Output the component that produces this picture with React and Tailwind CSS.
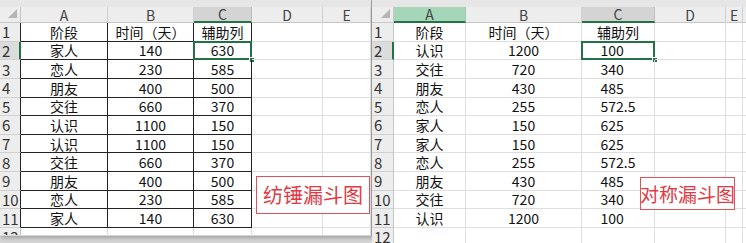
import React from 'react';

const FONT = "font-['Noto_Sans_CJK_SC','Noto_Sans',sans-serif]";

const spindle = [
  ['阶段', '时间（天）', '辅助列'],
  ['家人', 140, 630],
  ['恋人', 230, 585],
  ['朋友', 400, 500],
  ['交往', 660, 370],
  ['认识', 1100, 150],
  ['认识', 1100, 150],
  ['交往', 660, 370],
  ['朋友', 400, 500],
  ['恋人', 230, 585],
  ['家人', 140, 630],
];

const symmetric = [
  ['阶段', '时间（天）', '辅助列'],
  ['认识', 1200, 100],
  ['交往', 720, 340],
  ['朋友', 430, 485],
  ['恋人', 255, 572.5],
  ['家人', 150, 625],
  ['家人', 150, 625],
  ['恋人', 255, 572.5],
  ['朋友', 430, 485],
  ['交往', 720, 340],
  ['认识', 1200, 100],
];

const letters = ['A', 'B', 'C', 'D', 'E', 'F'];

// "0.?" style number: integers keep room for the decimal so columns line up
const Decimal = ({ value }) => {
  if (typeof value !== 'number' || !Number.isInteger(value)) return <span>{value}</span>;
  return (
    <span>
      {value}
      <span className="invisible">.5</span>
    </span>
  );
};

const Corner = () => (
  <div className="relative h-full border-r border-b border-[#c8c8c8] bg-[#ededed]">
    <svg className="absolute right-[3px] bottom-[4px]" width="9" height="9" viewBox="0 0 9 9">
      <polygon points="9,0 9,9 0,9" fill="#b5b5b5" />
    </svg>
  </div>
);

const Sheet = ({ grid, widths, data, bordered, greenCol, decimalCol, label, labelBox, tall }) => {
  const rowCount = 12;
  return (
    <div className={`relative bg-white overflow-hidden ${FONT} ${tall}`}>
      {/* formula bar edge */}
      <div className="h-[7px] bg-[#e6e6e6]" />

      {/* column header strip */}
      <div className={`grid ${grid} h-[16px]`}>
        <Corner />
        {widths.map((_, i) => {
          let cls = 'bg-[#ededed] border-r border-[#d0d0d0] border-b-[#c6c6c6]';
          if (i === 2) cls = 'bg-[#d4d4d4] border-r border-[#bdbdbd] border-b-[#217346] border-b-2';
          if (i === greenCol) cls = 'bg-[#a6d6ba] border-r border-[#9ec7ae] border-b-[#217346] border-b-2';
          return (
            <div
              key={i}
              className={`${cls} border-b flex items-center justify-center text-[14px] leading-none text-[#444]`}
            >
              {letters[i]}
            </div>
          );
        })}
      </div>

      {Array.from({ length: rowCount }).map((_, r) => {
        const row = data[r];
        return (
          <div key={r} className={`grid ${grid} h-[18.64px]`}>
            <div
              className={`flex items-center pl-[2px] text-[15px] leading-none text-[#333] border-b border-[#d0d0d0] ${
                r === 1
                  ? 'bg-[#dcdcdc] border-r-2 border-r-[#217346]'
                  : bordered && r < 11
                  ? 'bg-[#ededed] border-r border-r-[#222]'
                  : 'bg-[#ededed] border-r border-r-[#c6c6c6]'
              }`}
            >
              {r + 1}
            </div>
            {widths.map((_, c) => {
              const inTable = bordered && row && c < 3;
              const value = row && c < 3 ? row[c] : '';
              const selected = r === 1 && c === 2;
              return (
                <div
                  key={c}
                  className={`relative flex items-center justify-center text-[14px] leading-none text-[#111] border-r border-b ${
                    inTable ? 'border-[#222]' : 'border-[#dedede]'
                  }`}
                >
                  {c === decimalCol && r > 0 ? <Decimal value={value} /> : value}
                  {selected && (
                    <>
                      <div className="absolute -left-[1px] -top-[1px] right-[-1px] bottom-[-1px] border-2 border-[#217346]" />
                      <div className="absolute -right-[4px] -bottom-[4px] w-[6px] h-[6px] bg-[#217346] border border-white" />
                    </>
                  )}
                </div>
              );
            })}
          </div>
        );
      })}

      {/* text box drawn over the sheet */}
      <div
        className={`absolute ${labelBox} bg-white border border-[#e0525a] flex items-center justify-center text-[#e23a44] leading-none whitespace-nowrap`}
      >
        {label}
      </div>
    </div>
  );
};

export default function App() {
  return (
    <div className="flex w-[746px] h-[243px] bg-[#d6d6d6] overflow-hidden">
      <div className="w-[372px] h-[236px] border-r border-[#9a9a9a] shadow-[1px_2px_4px_rgba(0,0,0,0.25)]">
        <Sheet
          grid="grid-cols-[21px_87px_86px_58px_71px_48px]"
          widths={[0, 1, 2, 3, 4]}
          data={spindle}
          bordered
          greenCol={-1}
          decimalCol={-1}
          label="纺锤漏斗图"
          labelBox="left-[256px] top-[176px] w-[114px] h-[38px] text-[20px]"
          tall="h-[235px]"
        />
      </div>
      <div className="flex-1 h-full">
        <Sheet
          grid="grid-cols-[22px_72px_116px_73px_71px_17px_40px]"
          widths={[0, 1, 2, 3, 4, 5]}
          data={symmetric}
          bordered={false}
          greenCol={0}
          decimalCol={2}
          label="对称漏斗图"
          labelBox="left-[268px] top-[177px] w-[95px] h-[33px] text-[19px]"
          tall="h-[243px]"
        />
      </div>
    </div>
  );
}
